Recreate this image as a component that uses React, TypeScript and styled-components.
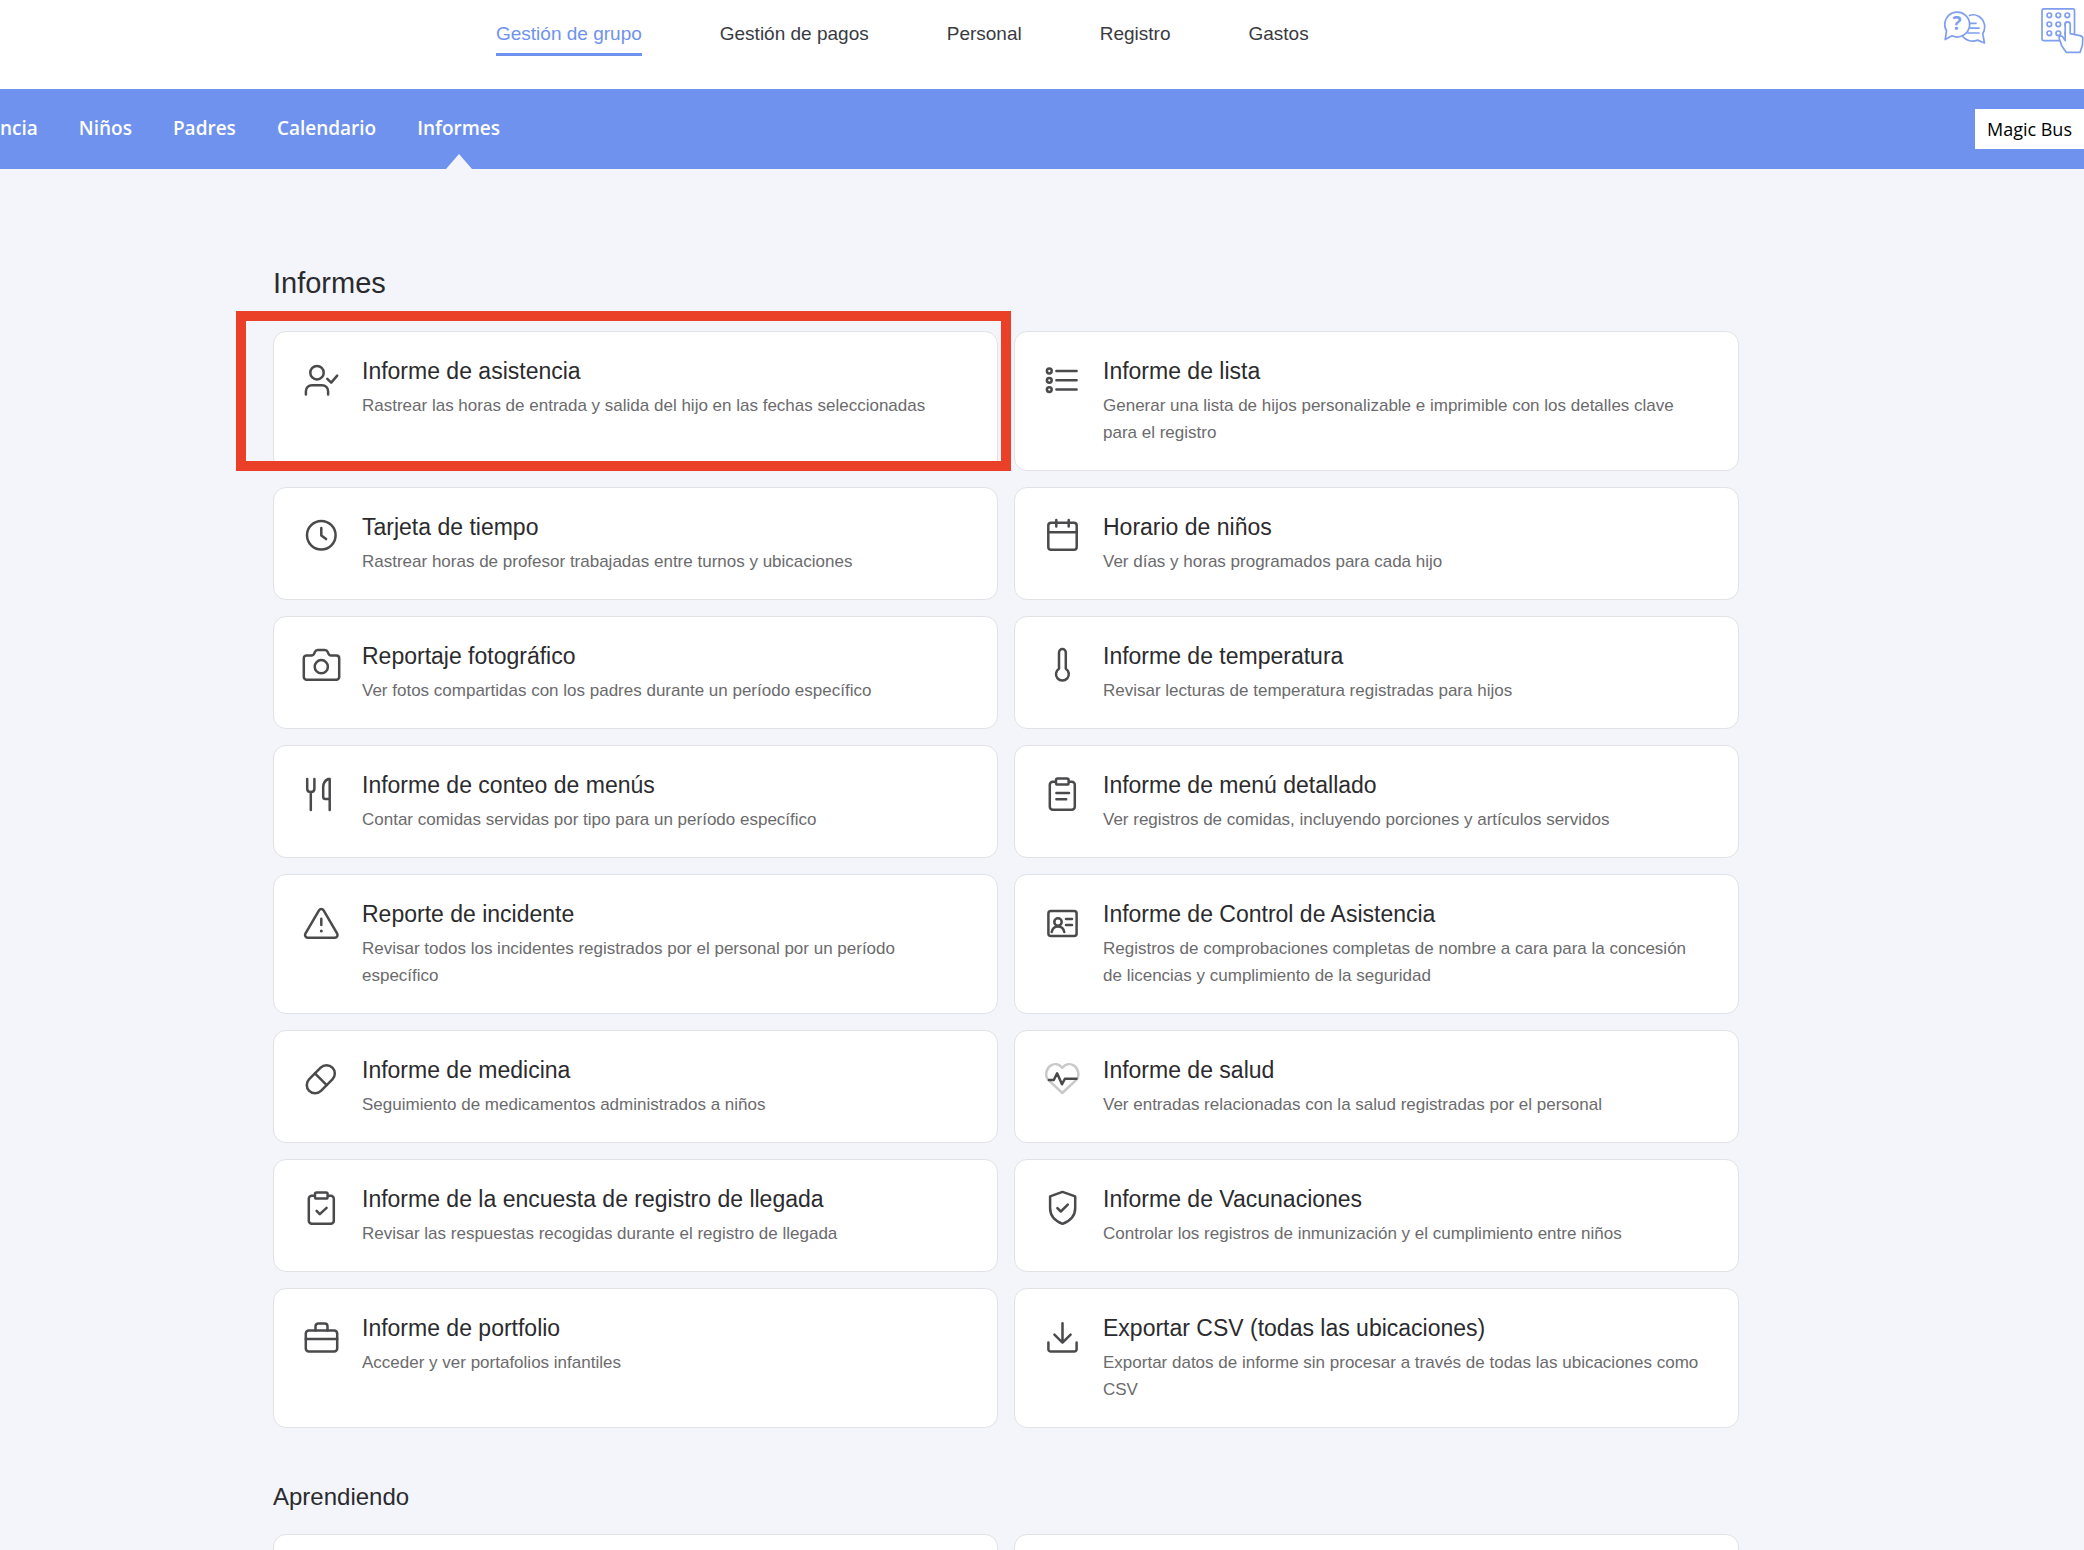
import React from "react";
import styled, { createGlobalStyle, css } from "styled-components";

const colors = {
  brand: "#6e92ee",
  brandSoft: "#7f9fee",
  page: "#f4f5fb",
  card: "#ffffff",
  border: "#e1e2e5",
  heading: "#2b2b2e",
  nav: "#3a3a42",
  muted: "#6b6b6d",
  icon: "#4a4a4c",
  highlight: "#ea4027",
};

const sans = '"Liberation Sans", Arial, Helvetica, sans-serif';
const humanist = '"Open Sans", "Noto Sans", sans-serif';

const GlobalStyle = createGlobalStyle`
  *, *::before, *::after { box-sizing: border-box; }
  body {
    margin: 0;
    background: ${colors.page};
    font-family: ${sans};
  }
`;

const Page = styled.div`
  height: 100vh;
  overflow: hidden;
  background: ${colors.page};
`;

const Header = styled.header`
  display: flex;
  justify-content: space-between;
  align-items: flex-start;
  height: 89px;
  padding: 0 0 0 496px;
  background: ${colors.card};
`;

const MainNav = styled.nav`
  display: flex;
  gap: 78px;
  padding-top: 21px;
`;

const MainLink = styled.a<{ $active?: boolean }>`
  padding-bottom: 6px;
  border-bottom: 3px solid transparent;
  color: ${colors.nav};
  font-size: 19px;
  line-height: 26px;
  text-decoration: none;
  white-space: nowrap;
  ${(p) =>
    p.$active &&
    css`
      color: ${colors.brand};
      border-bottom-color: ${colors.brand};
    `}
`;

const Tools = styled.div`
  display: flex;
  align-items: flex-start;
  gap: 55px;
  padding-top: 8px;
`;

const ToolButton = styled.button`
  display: block;
  padding: 0;
  border: 0;
  background: none;
  cursor: pointer;

  svg {
    display: block;
    fill: none;
    stroke: ${colors.brandSoft};
    stroke-width: 1.7;
    stroke-linecap: round;
    stroke-linejoin: round;
  }
`;

const SubBar = styled.div`
  display: flex;
  justify-content: space-between;
  align-items: center;
  height: 80px;
  background: ${colors.brand};
  font-family: ${humanist};
`;

const SubNav = styled.nav`
  display: flex;
  align-items: center;
  align-self: stretch;
  gap: 41px;
`;

const SubLink = styled.a<{ $active?: boolean }>`
  position: relative;
  display: flex;
  align-items: center;
  align-self: stretch;
  padding-bottom: 2px;
  color: #ffffff;
  font-size: 19px;
  font-weight: 600;
  line-height: 24px;
  text-decoration: none;
  ${(p) =>
    p.$active &&
    css`
      &::after {
        content: "";
        position: absolute;
        bottom: 0;
        left: calc(50% - 13px);
        border: solid transparent;
        border-width: 0 13px 15px;
        border-bottom-color: ${colors.page};
      }
    `}
`;

const SchoolButton = styled.button`
  height: 40px;
  padding: 0 12px;
  border: 0;
  background: ${colors.card};
  color: #000000;
  font-family: ${humanist};
  font-size: 18px;
  font-weight: 500;
  line-height: 24px;
  cursor: pointer;
`;

const Main = styled.main`
  padding: 94px 345px 0 273px;
`;

const PageTitle = styled.h1`
  margin: 0 0 28px;
  color: ${colors.heading};
  font-size: 29px;
  font-weight: 400;
  line-height: 40px;
`;

const SectionTitle = styled.h2`
  margin: 53px 0 21px;
  color: ${colors.heading};
  font-size: 24px;
  font-weight: 400;
  line-height: 32px;
`;

const CardGrid = styled.ul`
  display: grid;
  grid-template-columns: repeat(2, minmax(0, 1fr));
  gap: 16px;
  margin: 0;
  padding: 0;
  list-style: none;
`;

const CardItem = styled.li`
  position: relative;
  display: flex;
`;

const Card = styled.a`
  display: flex;
  flex: 1;
  align-items: flex-start;
  gap: 25px;
  min-height: 113px;
  padding: 24px 31px;
  border: 1px solid ${colors.border};
  border-radius: 13px;
  background: ${colors.card};
  text-decoration: none;
`;

const Highlight = styled.span`
  position: absolute;
  inset: -20px -13px 0 -37px;
  border: 10px solid ${colors.highlight};
  pointer-events: none;
`;

const CardIcon = styled.svg`
  flex: none;
  width: 32px;
  height: 32px;
  margin-top: 7px;
  overflow: visible;
  fill: none;
  stroke: ${colors.icon};
  stroke-width: 2.5;
  stroke-linecap: round;
  stroke-linejoin: round;
`;

const CardText = styled.div`
  display: flex;
  flex-direction: column;
  gap: 6px;
  min-width: 0;
`;

const CardTitle = styled.h3`
  margin: 0;
  color: ${colors.heading};
  font-size: 23px;
  font-weight: 400;
  line-height: 30px;
`;

const CardDescription = styled.p`
  margin: 0;
  color: ${colors.muted};
  font-size: 17px;
  line-height: 27px;
`;

const clipboard = (
  <>
    <rect x="3.8" y="4.8" width="25" height="28" rx="3" />
    <rect x="10" y="1.6" width="12.6" height="6" rx="1.6" fill="#ffffff" />
  </>
);

const icons = {
  attendance: (
    <>
      <circle cx="12" cy="9.7" r="6.7" />
      <path d="M.9 31.6v-3.4a6 6 0 0 1 6-6h10.2a6 6 0 0 1 6 6v3.4" />
      <path d="M22.3 15.9l3.9 3.7 6-7" />
    </>
  ),
  roster: (
    <>
      <circle cx="3.3" cy="8" r="2.4" />
      <circle cx="3.3" cy="17.3" r="2.4" />
      <circle cx="3.3" cy="26.6" r="2.4" />
      <path d="M10.4 8h20.2M10.4 17.3h20.2M10.4 26.6h20.2" />
    </>
  ),
  clock: (
    <>
      <circle cx="16.3" cy="16.3" r="14.3" />
      <path d="M16.3 9v7.5l4.8 3.6" />
    </>
  ),
  calendar: (
    <>
      <rect x="2.3" y="3.8" width="28.4" height="27" rx="2.8" />
      <path d="M2.3 13.3h28.4M10.3 1v6.4M22.7 1v6.4" />
    </>
  ),
  camera: (
    <>
      <path d="M1.6 7.4H7c1 0 1.6-.4 2-1.3l1-2.3c.5-1.3 1.4-1.9 2.8-1.9h7c1.4 0 2.3.6 2.8 1.9l1 2.3c.4.9 1 1.3 2 1.3h5.8a2.8 2.8 0 0 1 2.8 2.8V29a2.8 2.8 0 0 1-2.8 2.8H1.6A2.8 2.8 0 0 1-1.2 29V10.2a2.8 2.8 0 0 1 2.8-2.8z" />
      <circle cx="16.3" cy="18.7" r="6.6" />
    </>
  ),
  thermometer: (
    <path d="M13 20.8V4.5a3.4 3.4 0 0 1 6.8 0v16.3a6.4 6.4 0 1 1-6.8 0z" />
  ),
  meals: (
    <path d="M2.2 2v9.8c0 2 1.2 3.3 3.6 3.3s3.6-1.3 3.6-3.3V2M5.8 15.1V33M24.7 33V2h-1.5c-3.2 1.5-5 4.3-5 8v9.7c0 1.5.8 2.3 2.3 2.3h4.2" />
  ),
  mealDetail: (
    <>
      {clipboard}
      <path d="M10.4 16h12.6M10.4 22.3h9.8" />
    </>
  ),
  incident: (
    <>
      <path d="M14 4.3L.4 27.7a2.7 2.7 0 0 0 2.3 4h27.2a2.7 2.7 0 0 0 2.3-4L18.6 4.3a2.7 2.7 0 0 0-4.6 0z" />
      <path d="M16.3 12.8v6.2" />
      <circle cx="16.3" cy="25" r="1.5" fill={colors.icon} stroke="none" />
    </>
  ),
  idCard: (
    <>
      <rect x="2.4" y="4.9" width="28.2" height="25" rx="2.5" />
      <circle cx="12" cy="16" r="3.7" />
      <path d="M5.7 26c.9-3.6 3.1-5.4 6.3-5.4s5.4 1.8 6.3 5.4M20 13h6M20 19h6" />
    </>
  ),
  pill: (
    <g transform="rotate(-45 15.8 17.2)">
      <rect x="-.6" y="8.9" width="32.8" height="16.6" rx="8.3" />
      <path d="M15.8 8.9v16.6" />
    </g>
  ),
  health: (
    <>
      <path
        stroke="#c9c9ca"
        d="M16.3 31L2.6 18.2C-1.6 14 .1 7 4.6 3.6c3.8-2.5 8.5-1.6 11.7 2.2 3.2-3.8 7.9-4.7 11.7-2.2 4.5 3.4 6.2 10.4 2 14.6z"
      />
      <path d="M2.9 18h4.9l3.3-6.7L16 22.3l2.9-5.6h11.6" />
    </>
  ),
  survey: (
    <>
      {clipboard}
      <path d="M11.6 19.8l3.2 3.3 6.8-6.3" />
    </>
  ),
  shield: (
    <>
      <path d="M16.5.9l12.7 4.5V17c0 7.3-5 13-12.7 15.8C8.9 30 4.1 24.3 4.1 17V5.4z" />
      <path d="M11.4 17.2l3.4 3.3 7-6.8" />
    </>
  ),
  briefcase: (
    <>
      <rect x=".8" y="10.4" width="31.4" height="21.2" rx="3" />
      <path d="M.8 19h31.4M10.5 10.4V6.2a2.8 2.8 0 0 1 2.8-2.8h6.4a2.8 2.8 0 0 1 2.8 2.8v4.2" />
    </>
  ),
  download: (
    <path d="M16.5 3.2v19.3M8.4 14.6l8.1 8.1 8.1-8.1M2.4 22.5v6.7a2.4 2.4 0 0 0 2.4 2.4h23.4a2.4 2.4 0 0 0 2.4-2.4v-6.7" />
  ),
};

type Report = {
  icon: keyof typeof icons;
  title: string;
  description: string;
  highlighted?: boolean;
};

const reports: Report[] = [
  {
    icon: "attendance",
    title: "Informe de asistencia",
    description:
      "Rastrear las horas de entrada y salida del hijo en las fechas seleccionadas",
    highlighted: true,
  },
  {
    icon: "roster",
    title: "Informe de lista",
    description:
      "Generar una lista de hijos personalizable e imprimible con los detalles clave para el registro",
  },
  {
    icon: "clock",
    title: "Tarjeta de tiempo",
    description:
      "Rastrear horas de profesor trabajadas entre turnos y ubicaciones",
  },
  {
    icon: "calendar",
    title: "Horario de niños",
    description: "Ver días y horas programados para cada hijo",
  },
  {
    icon: "camera",
    title: "Reportaje fotográfico",
    description:
      "Ver fotos compartidas con los padres durante un período específico",
  },
  {
    icon: "thermometer",
    title: "Informe de temperatura",
    description: "Revisar lecturas de temperatura registradas para hijos",
  },
  {
    icon: "meals",
    title: "Informe de conteo de menús",
    description: "Contar comidas servidas por tipo para un período específico",
  },
  {
    icon: "mealDetail",
    title: "Informe de menú detallado",
    description:
      "Ver registros de comidas, incluyendo porciones y artículos servidos",
  },
  {
    icon: "incident",
    title: "Reporte de incidente",
    description:
      "Revisar todos los incidentes registrados por el personal por un período específico",
  },
  {
    icon: "idCard",
    title: "Informe de Control de Asistencia",
    description:
      "Registros de comprobaciones completas de nombre a cara para la concesión de licencias y cumplimiento de la seguridad",
  },
  {
    icon: "pill",
    title: "Informe de medicina",
    description: "Seguimiento de medicamentos administrados a niños",
  },
  {
    icon: "health",
    title: "Informe de salud",
    description:
      "Ver entradas relacionadas con la salud registradas por el personal",
  },
  {
    icon: "survey",
    title: "Informe de la encuesta de registro de llegada",
    description:
      "Revisar las respuestas recogidas durante el registro de llegada",
  },
  {
    icon: "shield",
    title: "Informe de Vacunaciones",
    description:
      "Controlar los registros de inmunización y el cumplimiento entre niños",
  },
  {
    icon: "briefcase",
    title: "Informe de portfolio",
    description: "Acceder y ver portafolios infantiles",
  },
  {
    icon: "download",
    title: "Exportar CSV (todas las ubicaciones)",
    description:
      "Exportar datos de informe sin procesar a través de todas las ubicaciones como CSV",
  },
];

const mainLinks = [
  "Gestión de grupo",
  "Gestión de pagos",
  "Personal",
  "Registro",
  "Gastos",
];

const subLinks = ["ncia", "Niños", "Padres", "Calendario", "Informes"];

function HelpIcon() {
  return (
    <svg width="42" height="38" viewBox="0 0 42 38">
      <path d="M25.5 7.5c2.5-1 6.2-.8 9 .8 6.2 3.6 8 11.4 4.2 17.4l1.8 9.3-6.8-2.9c-5.5 2.2-11.7.7-15.3-3.8" />
      <path d="M25.8 15.3h6.2M26.5 20.2h8.5M24 25h11" />
      <path fill="#ffffff" d="M1.2 31.6l1.3-8.8A12.4 12.4 0 1 1 8 27.8z" />
      <text
        x="13"
        y="22"
        textAnchor="middle"
        fontFamily="Open Sans, sans-serif"
        fontSize="19"
        fontWeight="700"
        fill={colors.brandSoft}
        stroke="none"
      >
        ?
      </text>
    </svg>
  );
}

function KeypadIcon() {
  const stops = [7.3, 16.3, 25.3];
  return (
    <svg width="43" height="46" viewBox="0 0 43 46">
      <rect x="1" y=".9" width="32.5" height="31.7" rx="1.5" />
      {stops.map((y) =>
        stops.map((x) => (
          <circle key={`${x}-${y}`} cx={x + 1} cy={y} r="2.3" />
        )),
      )}
      <path
        fill="#ffffff"
        d="M24.2 32.5V16.3a2.5 2.5 0 0 1 5 0v9.4l9.8 2c2 .4 2.9 1.4 2.8 3.2l-.4 6.3-2.3 7.1H25.2l-4.4-6.4-2.7-7.6c-.5-2.3 2.3-3.2 3.7-1.2z"
      />
    </svg>
  );
}

export default function App() {
  return (
    <Page>
      <GlobalStyle />
      <Header>
        <MainNav aria-label="Principal">
          {mainLinks.map((label, i) => (
            <MainLink key={label} href="#" $active={i === 0}>
              {label}
            </MainLink>
          ))}
        </MainNav>
        <Tools>
          <ToolButton type="button" aria-label="Ayuda">
            <HelpIcon />
          </ToolButton>
          <ToolButton type="button" aria-label="Teclado">
            <KeypadIcon />
          </ToolButton>
        </Tools>
      </Header>
      <SubBar>
        <SubNav aria-label="Grupo">
          {subLinks.map((label) => (
            <SubLink key={label} href="#" $active={label === "Informes"}>
              {label}
            </SubLink>
          ))}
        </SubNav>
        <SchoolButton type="button">Magic Bus</SchoolButton>
      </SubBar>
      <Main>
        <PageTitle>Informes</PageTitle>
        <CardGrid>
          {reports.map((report) => (
            <CardItem key={report.title}>
              <Card href="#">
                <CardIcon viewBox="0 0 32 32" aria-hidden="true">
                  {icons[report.icon]}
                </CardIcon>
                <CardText>
                  <CardTitle>{report.title}</CardTitle>
                  <CardDescription>{report.description}</CardDescription>
                </CardText>
              </Card>
              {report.highlighted && <Highlight />}
            </CardItem>
          ))}
        </CardGrid>
        <SectionTitle>Aprendiendo</SectionTitle>
        <CardGrid>
          <CardItem>
            <Card as="div" />
          </CardItem>
          <CardItem>
            <Card as="div" />
          </CardItem>
        </CardGrid>
      </Main>
    </Page>
  );
}
